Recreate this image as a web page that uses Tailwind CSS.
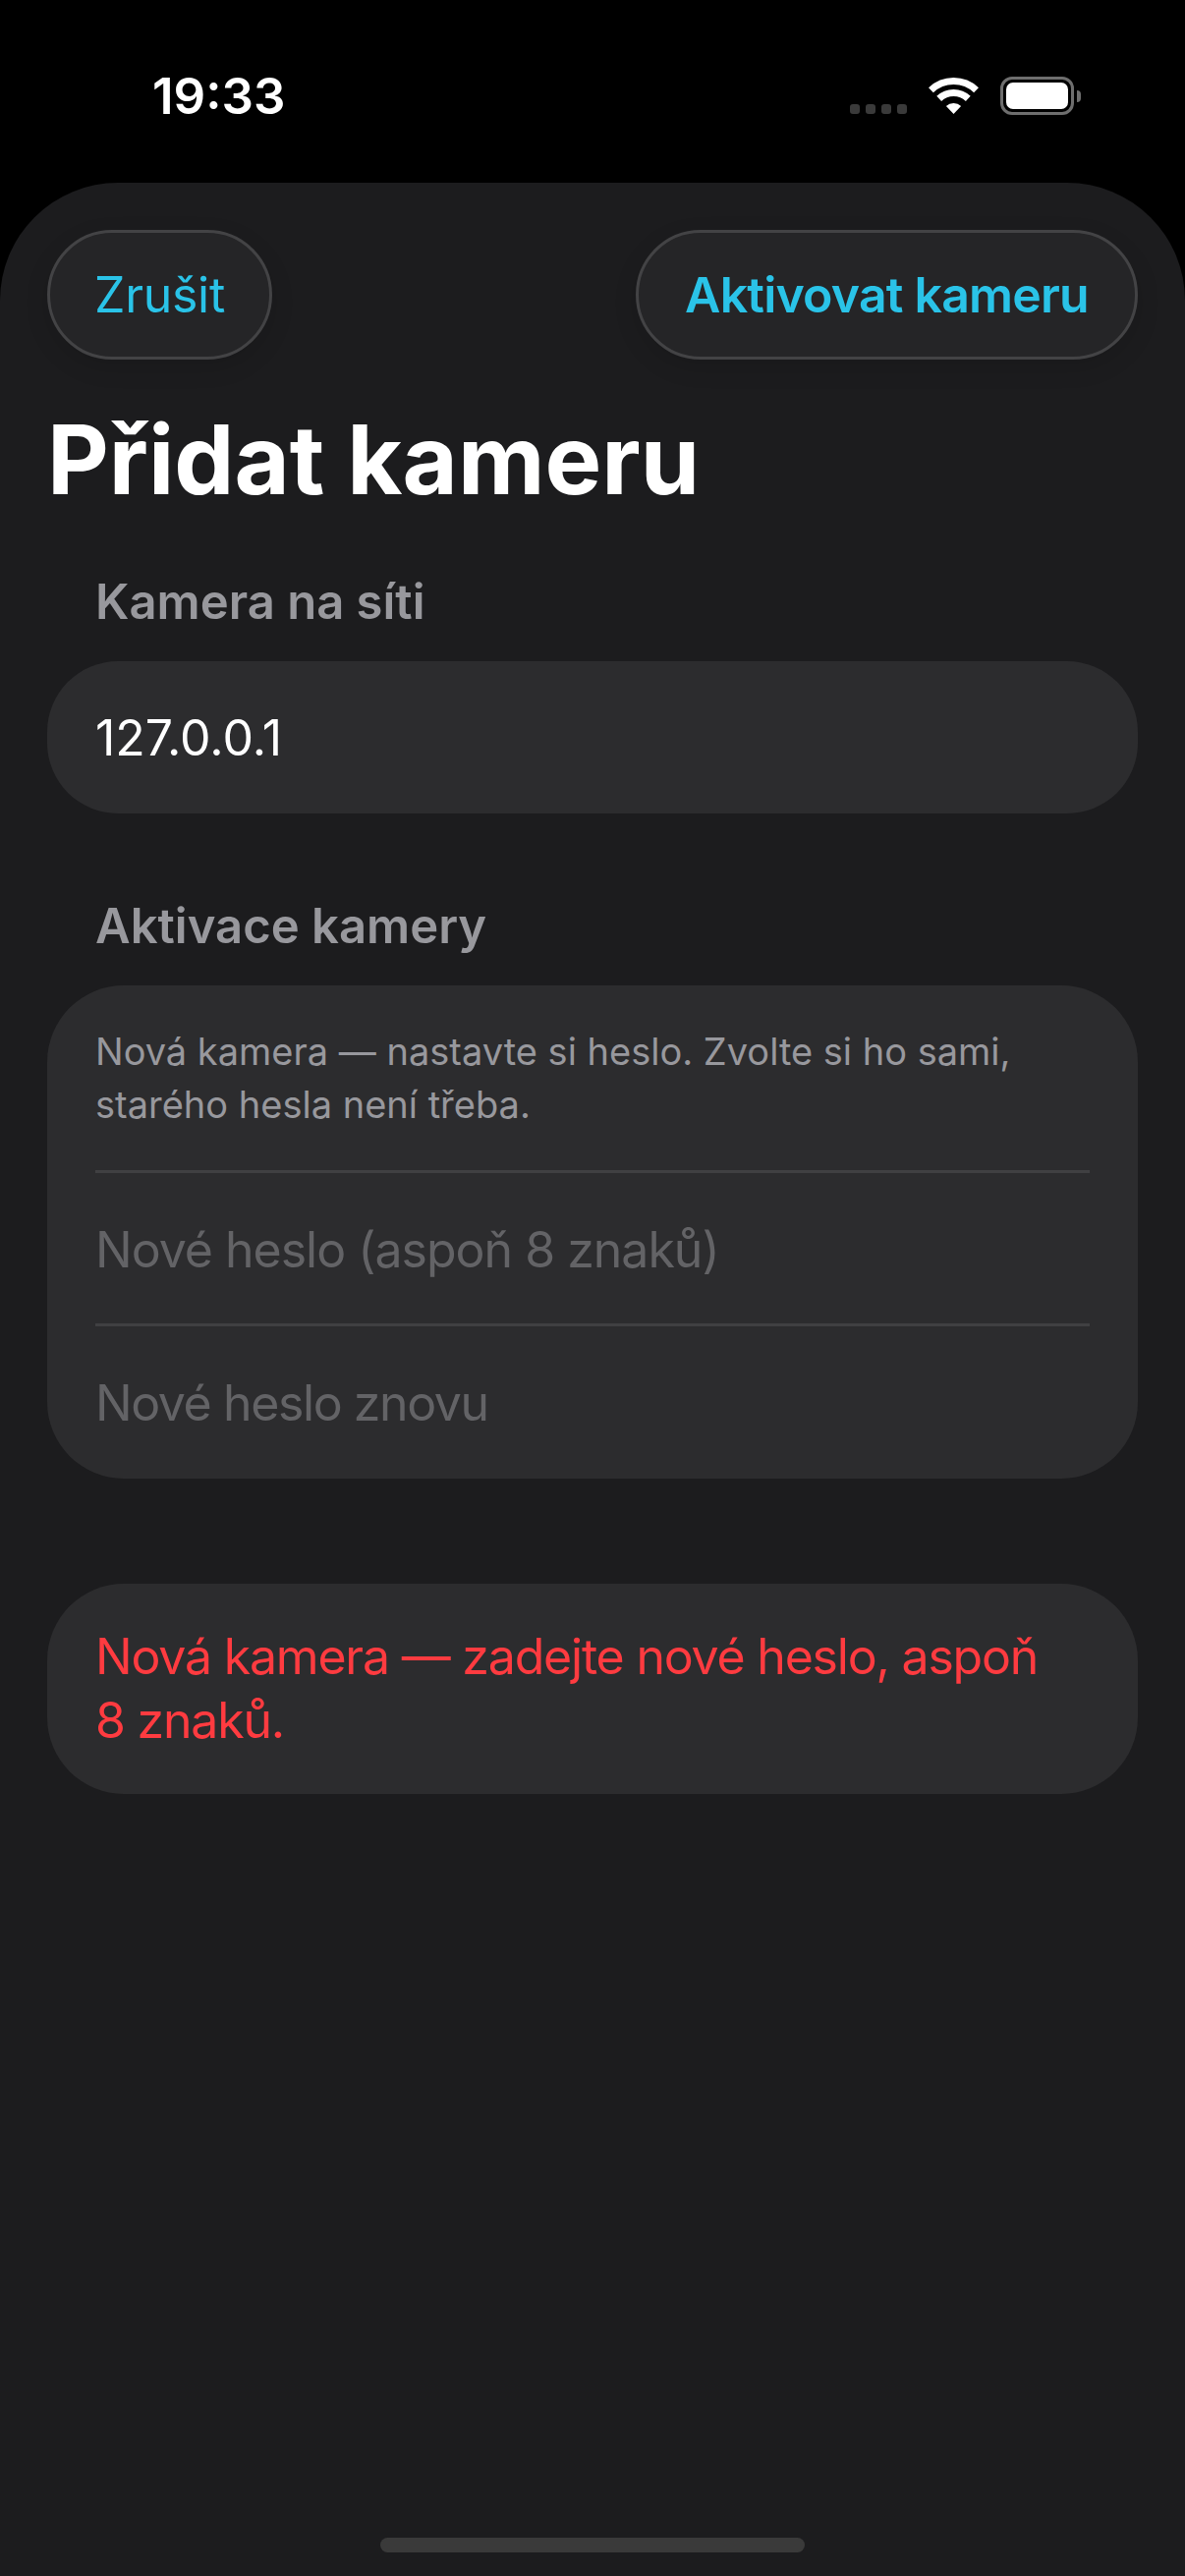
<!DOCTYPE html>
<html lang="cs">
<head>
  <meta charset="UTF-8">
  <meta name="viewport" content="width=device-width, initial-scale=1.0">
  <title>Přidat kameru</title>
  <script src="https://cdn.jsdelivr.net/npm/@tailwindcss/browser@4"></script>
</head>
<body class="bg-black h-[2622px] w-[1206px] overflow-hidden flex flex-col font-['Inter','Liberation_Sans',sans-serif] antialiased">

  <!-- status bar -->
  <div class="h-[186px] shrink-0 flex items-start justify-between pt-[72px] pl-[155px] pr-[106px]">
    <span class="text-white text-[51px] leading-[51px] font-semibold">19:33</span>
    <div class="flex items-start pt-[7px]">
      <div class="flex gap-[6px] mt-[27px] mr-[22px]">
        <i class="w-[10px] h-[10px] rounded-[3px] bg-[#3a3a3a]"></i>
        <i class="w-[10px] h-[10px] rounded-[3px] bg-[#3a3a3a]"></i>
        <i class="w-[10px] h-[10px] rounded-[3px] bg-[#3a3a3a]"></i>
        <i class="w-[10px] h-[10px] rounded-[3px] bg-[#3a3a3a]"></i>
      </div>
      <svg width="51" height="37" viewBox="0 0 51 37" class="mr-[22px]" fill="none" stroke="#fff">
        <path d="M2.45 12.7A33.5 33.5 0 0 1 48.55 12.7" stroke-width="7"/>
        <path d="M10.7 21.4A21.5 21.5 0 0 1 40.3 21.4" stroke-width="7"/>
        <path d="M25.5 37L17.9 29A11 11 0 0 1 33.1 29Z" fill="#fff" stroke="none"/>
      </svg>
      <div class="flex items-center -mt-px">
        <div class="w-[75px] h-[39px] rounded-[12px] border-[3px] border-[#6e6e6e] p-[3px]">
          <div class="w-full h-full rounded-[7px] bg-white"></div>
        </div>
        <div class="w-[4px] h-[12px] ml-[3px] rounded-r-[4px] bg-[#6e6e6e]"></div>
      </div>
    </div>
  </div>

  <!-- sheet -->
  <div class="flex-1 relative bg-[#1c1c1e] rounded-t-[120px] px-[48px] pt-[48px]">
    <div class="flex justify-between">
      <button class="h-[132px] w-[229px] rounded-[66px] bg-[#252527] border-[3px] border-[#434345] text-[#2ac3e8] text-[50px] tracking-[-0.3px] shadow-[0_8px_24px_rgba(0,0,0,0.12)]">Zrušit</button>
      <button class="h-[132px] w-[511px] rounded-[66px] bg-[#252527] border-[3px] border-[#434345] text-[#2ac3e8] text-[50px] font-semibold tracking-[-0.8px] shadow-[0_8px_24px_rgba(0,0,0,0.12)]">Aktivovat kameru</button>
    </div>

    <h1 class="text-white text-[97px] leading-[120px] font-bold mt-[42px]">Přidat kameru</h1>

    <h2 class="text-[#98989d] text-[49px] leading-[60px] font-semibold ml-[49px] mt-[55px]">Kamera na síti</h2>
    <div class="mt-[30px] h-[155px] rounded-[72px] bg-[#2c2c2e] flex items-center px-[49px] pt-[2px]">
      <span class="text-white text-[50px]">127.0.0.1</span>
    </div>

    <h2 class="text-[#98989d] text-[49px] leading-[60px] font-semibold ml-[49px] mt-[85px]">Aktivace kamery</h2>
    <div class="mt-[30px] rounded-[78px] bg-[#2c2c2e] px-[49px]">
      <p class="text-[#98989d] text-[38px] leading-[54px] pt-[40px] pb-[40px]">Nová kamera — nastavte si heslo. Zvolte si ho sami, starého hesla není třeba.</p>
      <div class="h-[3px] bg-[#404042]"></div>
      <div class="h-[153px] flex items-center pt-[3px] text-[#636366] text-[50px] tracking-[-1px]">Nové heslo (aspoň 8 znaků)</div>
      <div class="h-[3px] bg-[#404042]"></div>
      <div class="h-[155px] flex items-center pt-[2px] text-[#636366] text-[50px] tracking-[-1.4px]">Nové heslo znovu</div>
    </div>

    <div class="mt-[107px] rounded-[78px] bg-[#2c2c2e] pl-[49px] pr-[60px] pt-[42px] h-[214px]">
      <p class="text-[#ff3b40] text-[50px] leading-[65px] tracking-[-1.2px]">Nová kamera — zadejte nové heslo, aspoň 8 znaků.</p>
    </div>

    <!-- home indicator -->
    <div class="absolute bottom-[24px] left-[387px] w-[432px] h-[15px] rounded-full bg-[#3a3a3a]"></div>
  </div>
</body>
</html>
